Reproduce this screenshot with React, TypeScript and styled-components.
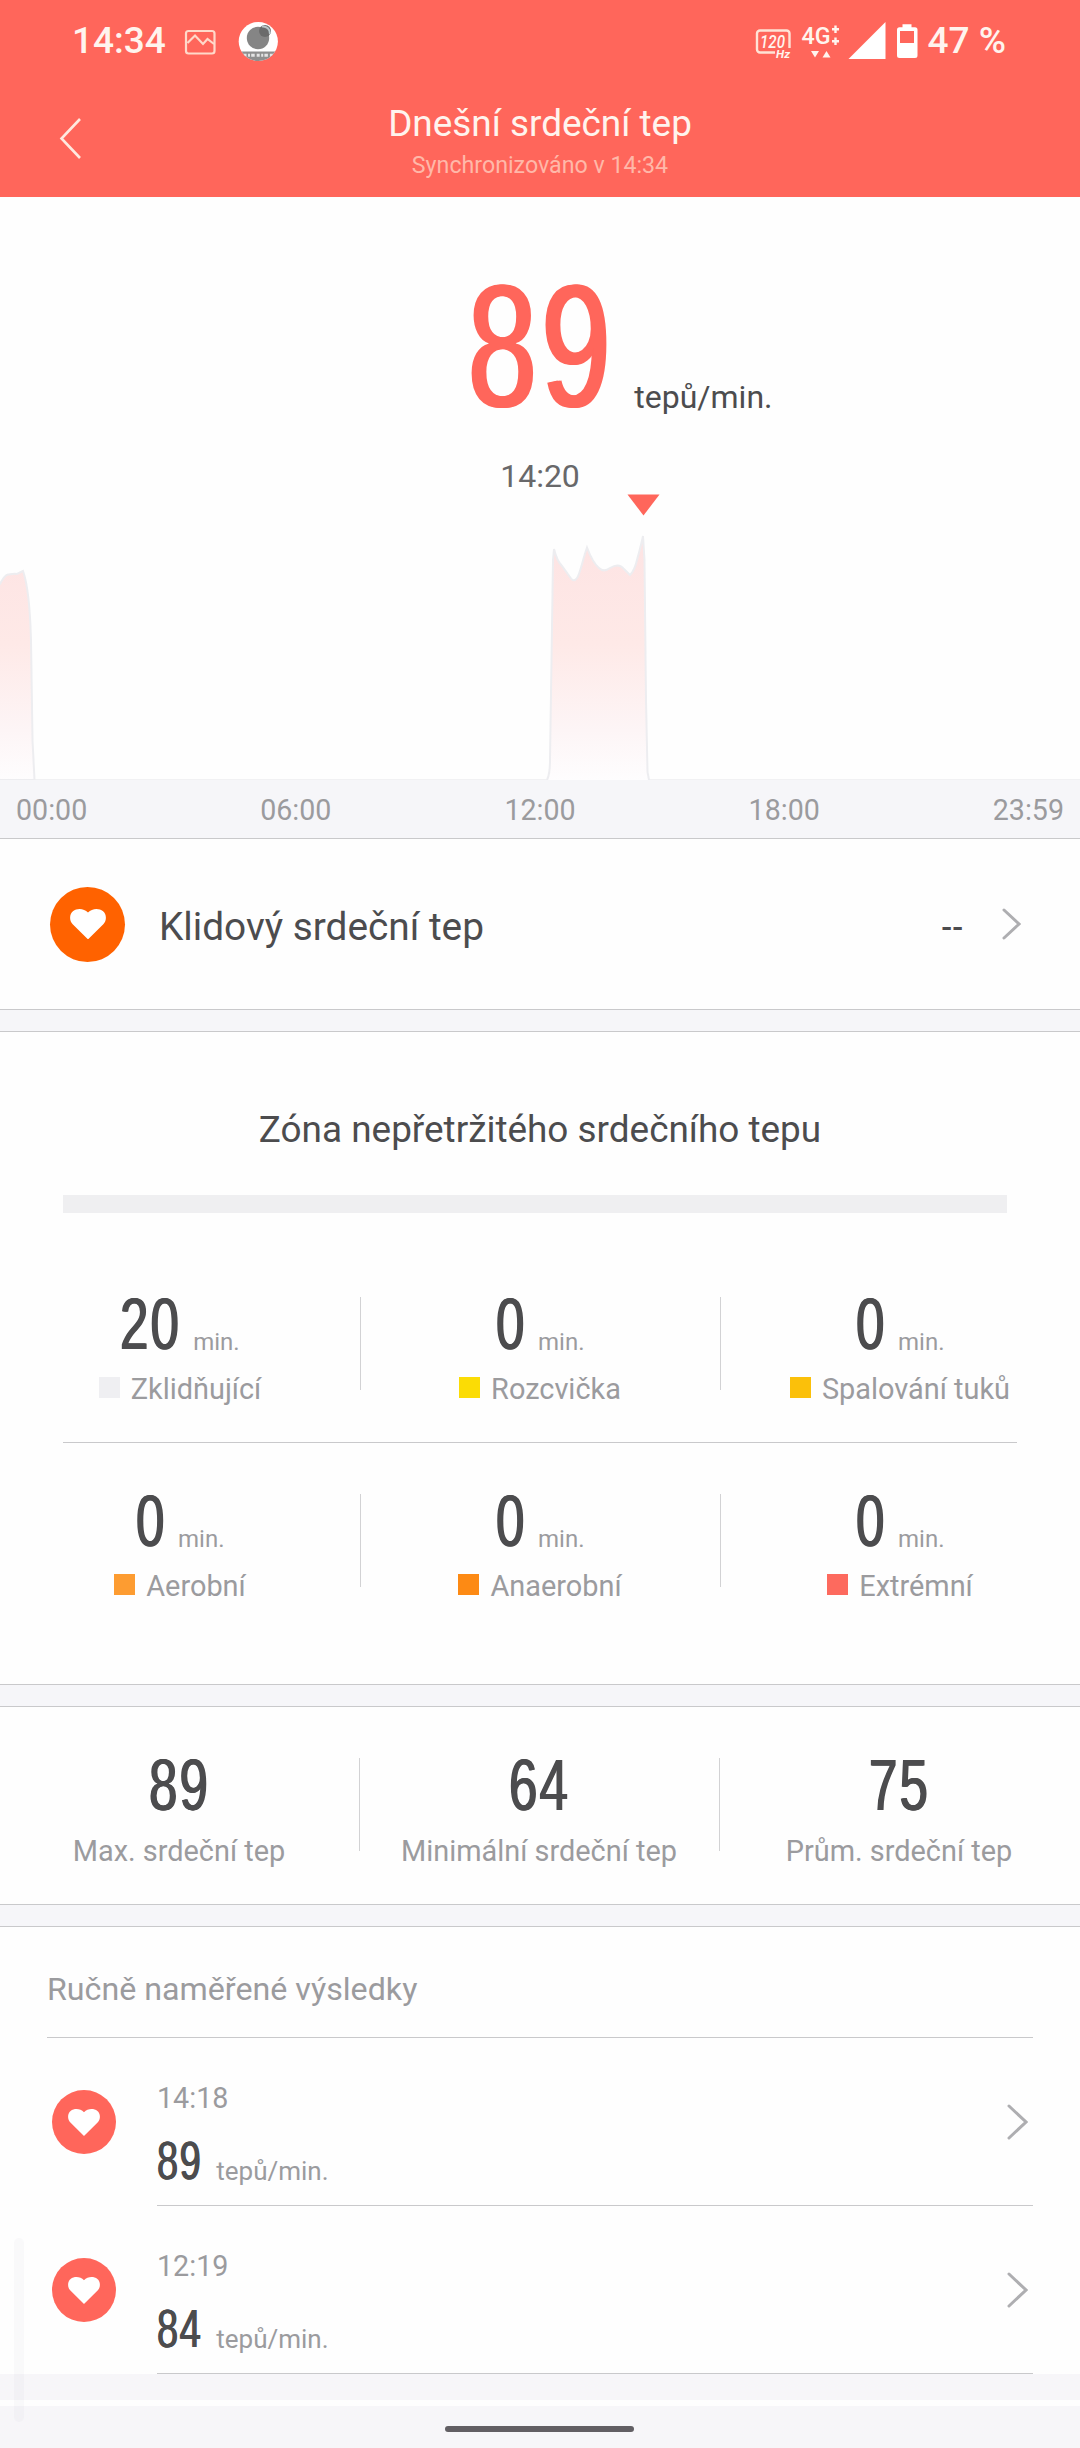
import React from "react";
import styled, { createGlobalStyle } from "styled-components";

const coral = "#ff665b";
const ink = "#4c4c4e";
const muted = "#9b9b9e";
const line = "#c9c9cb";
const paper = "#fefefe";
const wash = "#f6f6f9";

const GlobalStyle = createGlobalStyle`
  * { box-sizing: border-box; }
  body { margin: 0; background: ${paper}; }
  svg { display: block; flex: none; }
`;

const Screen = styled.main`
  position: relative;
  display: flex;
  flex-direction: column;
  width: 1080px;
  height: 2448px;
  overflow: hidden;
  background: ${paper};
  color: ${ink};
  font-family: Roboto, "Noto Sans", sans-serif;
  white-space: nowrap;
`;

const Header = styled.header`
  height: 197px;
  background: ${coral};
  color: #fff4ee;
`;

const StatusBar = styled.div`
  display: flex;
  align-items: center;
  justify-content: space-between;
  height: 82px;
  padding: 0 74px 0 72px;
  font-size: 37px;
  font-weight: 500;
  line-height: 82px;
`;

const StatusGroup = styled.div`
  display: flex;
  align-items: center;
  gap: 15px;
`;

const StatusIcons = styled.svg`
  margin-right: -5px;
  font-family: Roboto, sans-serif;
`;

const TitleBar = styled.div`
  display: grid;
  grid-template-columns: 100px 1fr 100px;
  height: 115px;
`;

const BackButton = styled.button`
  display: flex;
  padding: 35px 0 0 59px;
  border: 0;
  background: none;
`;

const Titles = styled.div`
  display: flex;
  flex-direction: column;
  align-items: center;
  padding-top: 19px;
`;

const Title = styled.h1`
  margin: 0;
  font-size: 36.9px;
  font-weight: 400;
  line-height: 46px;
`;

const Subtitle = styled.div`
  color: #ffb8a9;
  font-size: 23.2px;
  line-height: 36px;
`;

const Condensed = styled.span<{ $digits: number; $size: number; $color?: string }>`
  display: inline-block;
  width: calc(${(p) => p.$digits} * 0.71 * (1ch + 0.04em));
  color: ${(p) => p.$color ?? ink};
  font-family: "Liberation Sans", Arial, sans-serif;
  font-size: ${(p) => p.$size}px;
  letter-spacing: 0.04em;
  transform: translateY(-0.012em) scaleX(0.71);
  transform-origin: 0 50%;
  text-shadow: ${(p) => `${p.$size * 0.015}px 0 currentColor, -${p.$size * 0.015}px 0 currentColor`};
`;

const Hero = styled.section`
  display: flex;
  flex-direction: column;
  height: 583px;
  padding-top: 51px;
`;

const HeroReading = styled.div`
  display: flex;
  align-items: baseline;
  height: 200px;
  padding-left: 468px;
  line-height: 200px;
`;

const HeroUnit = styled.span`
  margin-left: 19px;
  font-size: 32px;
`;

const HeroTime = styled.div`
  margin-top: 12px;
  color: #68686a;
  font-size: 32px;
  line-height: 32px;
  text-align: center;
`;

const Axis = styled.div`
  display: flex;
  justify-content: space-between;
  height: 59px;
  padding: 2px 16px 0;
  border-bottom: 1px solid ${line};
  background: ${wash};
  color: ${muted};
  font-size: 28.6px;
  line-height: 56px;
`;

const RestingRow = styled.section`
  display: flex;
  align-items: center;
  height: 170px;
  padding: 0 59px 0 50px;
`;

const Badge = styled.div<{ $size: number; $color: string }>`
  display: flex;
  align-items: center;
  justify-content: center;
  flex: none;
  width: ${(p) => p.$size}px;
  height: ${(p) => p.$size}px;
  border-radius: 50%;
  background: ${(p) => p.$color};
`;

const RestingLabel = styled.div`
  flex: 1;
  padding: 4px 0 0 34px;
  font-size: 38.8px;
`;

const RestingValue = styled.div`
  padding: 5px 39px 0 0;
  font-size: 32px;
  font-weight: 500;
`;

const Gap = styled.div`
  height: 23px;
  border: solid ${line};
  border-width: 1px 0;
  background: ${wash};
`;

const Zones = styled.section`
  height: 652px;
  padding-top: 73px;
`;

const ZonesTitle = styled.h2`
  margin: 0;
  font-size: 36.9px;
  font-weight: 400;
  line-height: 50px;
  text-align: center;
`;

const ZoneBar = styled.div`
  height: 18px;
  margin: 40px 73px 0 63px;
  background: #efeff1;
`;

const ZoneRow = styled.div`
  display: grid;
  grid-template-columns: repeat(3, 1fr);
  height: 157px;
`;

const ZoneLine = styled.div`
  height: 1px;
  margin: 0 63px 39px;
  background: ${line};
`;

const ZoneBody = styled.div`
  padding-top: 72px;
`;

const Cell = styled.div<{ $ruled: boolean; $ruleTop: number }>`
  display: flex;
  flex-direction: column;
  align-items: center;
  padding-top: 5px;
  background: ${(p) =>
    p.$ruled ? `linear-gradient(#d2d2d4, #d2d2d4) 0 ${p.$ruleTop}px / 1px 93px no-repeat` : "none"};
`;

const CellReading = styled.div`
  display: flex;
  align-items: baseline;
  gap: 12px;
  height: 70px;
  line-height: 70px;
`;

const Minutes = styled.span`
  color: ${muted};
  font-size: 24px;
`;

const CellLabel = styled.div`
  display: flex;
  align-items: center;
  gap: 11px;
  margin-top: 9px;
  color: ${muted};
  font-size: 28.9px;
  line-height: 41px;
`;

const Swatch = styled.i<{ $color: string }>`
  width: 21px;
  height: 21px;
  margin-bottom: 4px;
  background: ${(p) => p.$color};
`;

const Stats = styled.section`
  display: grid;
  grid-template-columns: repeat(3, 1fr);
  height: 197px;
  margin: 0 1px 0 -1px;
  padding-top: 39px;

  ${CellLabel} {
    margin-top: 10px;
  }
`;

const Results = styled.section`
  padding: 0 47px;
`;

const ResultsTitle = styled.h2`
  height: 111px;
  margin: 0;
  padding-top: 40px;
  border-bottom: 1px solid ${line};
  color: ${muted};
  font-size: 32.2px;
  font-weight: 400;
  line-height: 44px;
`;

const ResultRow = styled.div`
  display: flex;
  align-items: center;
  height: 168px;
  padding-left: 5px;
`;

const ResultBody = styled.div`
  display: flex;
  align-items: center;
  flex: 1;
  height: 168px;
  margin-left: 41px;
  padding-right: 5px;
  border-bottom: 1px solid ${line};
`;

const ResultText = styled.div`
  flex: 1;
  align-self: flex-start;
  padding-top: 42px;
  color: ${muted};
`;

const ResultTime = styled.div`
  font-size: 28.7px;
  line-height: 36px;
`;

const ResultReading = styled.div`
  display: flex;
  align-items: baseline;
  gap: 14px;
  height: 54px;
  margin-top: 19px;
  font-size: 26px;
  line-height: 54px;
`;

const Footer = styled.footer`
  display: flex;
  flex: 1;
  flex-direction: column;
  align-items: center;
  border-top: 26px solid #f7f6f9;
  background: #f7f6f9;
`;

const FooterStripe = styled.div`
  width: 100%;
  height: 6px;
  background: ${paper};
`;

const HomeIndicator = styled.div`
  width: 189px;
  height: 6px;
  margin: 20px 2px 0 0;
  border-radius: 3px;
  background: #625f64;
`;

const EdgeHandle = styled.div`
  position: absolute;
  left: 14px;
  top: 2238px;
  width: 10px;
  height: 184px;
  border-radius: 5px;
  background: rgba(90, 90, 120, 0.03);
`;

function Heart({ width }: { width: number }) {
  return (
    <svg width={width} height={(width * 27) / 32} viewBox="0 0 32 27" fill="#fff">
      <path d="M16 27 L2.4 13.6 C-1 10 -.4 4.4 2.6 2 C6.4 -1 12.4 -.6 16 3.2 C19.6 -.6 25.6 -1 29.4 2 C32.4 4.4 33 10 29.6 13.6 Z" />
    </svg>
  );
}

function Chevron({ width, height }: { width: number; height: number }) {
  return (
    <svg width={width} height={height} fill="none" stroke="#aeaeb1" strokeWidth="3" strokeLinecap="round">
      <path d={`M2 2 L${width - 2} ${height / 2} L2 ${height - 2}`} />
    </svg>
  );
}

function NotificationIcons() {
  return (
    <svg width="100" height="46" viewBox="181 16 100 46">
      <g fill="none" stroke="#ffd9ca" strokeWidth="2.2">
        <rect x="186" y="29" width="28.5" height="22.5" rx="2.5" />
        <path d="M187.5 41 L195 33.5 L203 42 L207.5 37 L214 42" />
      </g>
      <clipPath id="avatar">
        <circle cx="258.3" cy="39.5" r="19.6" />
      </clipPath>
      <g clipPath="url(#avatar)">
        <rect x="238" y="19" width="41" height="41" fill="#fff" />
        <rect x="238" y="49.5" width="41" height="11" fill="#8f8f8f" />
        <circle cx="258" cy="36" r="11.2" fill="#858585" />
        <circle cx="265" cy="29" r="6" fill="#6b6b6b" />
        <path d="M262 24.5 a7 7 0 0 1 8 7.5" fill="none" stroke="#b9c4c6" strokeWidth="2" />
        <path d="M243.500 53.300h31" stroke="#e4e4e4" strokeWidth="3" strokeDasharray="3 1.5 2 1.2 3.500 2" />
      </g>
    </svg>
  );
}

function SignalIcons() {
  return (
    <StatusIcons width="164" height="46" viewBox="754 16 164 46" fill="#fff4ee">
      <path
        d="M775 50.500H760a3 3 0 0 1-3-3V31.500a3 3 0 0 1 3-3h26.500a3 3 0 0 1 3 3V46"
        fill="none"
        stroke="#ffe3d6"
        strokeWidth="2.4"
      />
      <text x="760" y="45.500" fontSize="17.500" fontWeight="500" fontStyle="italic" textLength="25" lengthAdjust="spacingAndGlyphs">
        120
      </text>
      <text x="776" y="56" fontSize="11" fontWeight="700" fontStyle="italic" textLength="14" lengthAdjust="spacingAndGlyphs">
        Hz
      </text>
      <text x="801.500" y="42" fontSize="24.500" fontWeight="500" textLength="29" lengthAdjust="spacingAndGlyphs">
        4G
      </text>
      <path d="M835.500 23.500v7.500M832 27.200h7M835.500 35.500v7.500M832 39.200h7" stroke="#fff4ee" strokeWidth="2.4" />
      <path d="M811 49h8l-4 6.500zM822.500 55.500h8l-4-6.500z" />
      <path d="M848.500 57 L885.500 20 V57 Z" fill="#fff" />
      <path
        fillRule="evenodd"
        fill="#fff"
        d="M902.500 22.300h9v3h3.500a2.500 2.500 0 0 1 2.500 2.500V53.500a2.500 2.500 0 0 1-2.500 2.500H899.500a2.500 2.500 0 0 1-2.500-2.500V27.800a2.500 2.500 0 0 1 2.500-2.500h3zM900 29v12h14V29z"
      />
    </StatusIcons>
  );
}

const leftCurve =
  "M-3 93 L0 92 C3 86 5 83 8 82.500 C12 82 14 81.500 17 82 L23 79 C27 90 30 112 31 148 L32.500 248 L34.500 288";
const rightCurve =
  "M547 288 C549 284 550 280 550 268 L551.500 168 L553 68 L554 57 C556 65 558 70 562 74 L571 86.500 C573 89 575 89 577 86 C580 82 582 70 587 55.500 C591 66 594 72 599 76 C602 79 606 79 610 76 C615 73 620 72 624 77 L630 83 C633 80 635 77 637 68 C639 60 641 54 643 44 L644.500 68 L646 208 L647.500 280 L649 288";

function HeartRateChart() {
  return (
    <svg width="1080" height="288" viewBox="0 0 1080 288">
      <defs>
        <linearGradient id="fade" gradientUnits="userSpaceOnUse" x1="0" y1="40" x2="0" y2="288">
          <stop offset="0" stopColor="#fde3e3" />
          <stop offset="0.45" stopColor="#fee9e7" />
          <stop offset="0.8" stopColor="#fdf5f6" />
          <stop offset="1" stopColor="#fefdfe" />
        </linearGradient>
      </defs>
      <path d="M34 287.500 H547 M649 287.500 H1080" stroke="#f1f1f3" />
      <g fill="url(#fade)" stroke="#ededf0" strokeWidth="2">
        <path d={`${leftCurve} H-3`} />
        <path d={rightCurve} />
      </g>
      <path d="M627.500 2.500 H659.500 L643.500 23.500 Z" fill={coral} />
    </svg>
  );
}

type Zone = { value: string; label: string; color: string };

const zoneRows: Zone[][] = [
  [
    { value: "20", label: "Zklidňující", color: "#efeff2" },
    { value: "0", label: "Rozcvička", color: "#fbdc05" },
    { value: "0", label: "Spalování tuků", color: "#fbc00a" },
  ],
  [
    { value: "0", label: "Aerobní", color: "#fd9c31" },
    { value: "0", label: "Anaerobní", color: "#fd8a14" },
    { value: "0", label: "Extrémní", color: "#fd6a5e" },
  ],
];

const stats = [
  { value: "89", label: "Max. srdeční tep" },
  { value: "64", label: "Minimální srdeční tep" },
  { value: "75", label: "Prům. srdeční tep" },
];

const results = [
  { time: "14:18", value: "89" },
  { time: "12:19", value: "84" },
];

function ZoneCells({ zones }: { zones: Zone[] }) {
  return (
    <ZoneRow>
      {zones.map((zone, i) => (
        <Cell key={zone.label} $ruled={i > 0} $ruleTop={12}>
          <CellReading>
            <Condensed $digits={zone.value.length} $size={72}>{zone.value}</Condensed>
            <Minutes>min.</Minutes>
          </CellReading>
          <CellLabel>
            <Swatch $color={zone.color} />
            {zone.label}
          </CellLabel>
        </Cell>
      ))}
    </ZoneRow>
  );
}

export default function App() {
  return (
    <Screen>
      <GlobalStyle />
      <Header>
        <StatusBar>
          <StatusGroup>
            14:34
            <NotificationIcons />
          </StatusGroup>
          <StatusGroup>
            <SignalIcons />
            47 %
          </StatusGroup>
        </StatusBar>
        <TitleBar>
          <BackButton aria-label="Zpět">
            <svg width="23" height="43" fill="none" stroke="#ffe9df" strokeWidth="2.6">
              <path d="M21 2 L2.500 21.500 L21 41" />
            </svg>
          </BackButton>
          <Titles>
            <Title>Dnešní srdeční tep</Title>
            <Subtitle>Synchronizováno v 14:34</Subtitle>
          </Titles>
        </TitleBar>
      </Header>

      <Hero>
        <HeroReading>
          <Condensed $digits={2} $size={174} $color={coral}>89</Condensed>
          <HeroUnit>tepů/min.</HeroUnit>
        </HeroReading>
        <HeroTime>14:20</HeroTime>
        <HeartRateChart />
      </Hero>
      <Axis>
        {["00:00", "06:00", "12:00", "18:00", "23:59"].map((tick) => (
          <span key={tick}>{tick}</span>
        ))}
      </Axis>

      <RestingRow>
        <Badge $size={75} $color="#ff6200">
          <Heart width={36} />
        </Badge>
        <RestingLabel>Klidový srdeční tep</RestingLabel>
        <RestingValue>--</RestingValue>
        <Chevron width={19} height={32} />
      </RestingRow>
      <Gap />

      <Zones>
        <ZonesTitle>Zóna nepřetržitého srdečního tepu</ZonesTitle>
        <ZoneBar />
        <ZoneBody>
          <ZoneCells zones={zoneRows[0]} />
          <ZoneLine />
          <ZoneCells zones={zoneRows[1]} />
        </ZoneBody>
      </Zones>
      <Gap />

      <Stats>
        {stats.map((stat, i) => (
          <Cell key={stat.label} $ruled={i > 0} $ruleTop={12}>
            <CellReading>
              <Condensed $digits={2} $size={72}>{stat.value}</Condensed>
            </CellReading>
            <CellLabel>{stat.label}</CellLabel>
          </Cell>
        ))}
      </Stats>
      <Gap />

      <Results>
        <ResultsTitle>Ručně naměřené výsledky</ResultsTitle>
        {results.map((result) => (
          <ResultRow key={result.time}>
            <Badge $size={64} $color={coral}>
              <Heart width={32} />
            </Badge>
            <ResultBody>
              <ResultText>
                <ResultTime>{result.time}</ResultTime>
                <ResultReading>
                  <Condensed $digits={2} $size={53.5}>{result.value}</Condensed>
                  tepů/min.
                </ResultReading>
              </ResultText>
              <Chevron width={21} height={36} />
            </ResultBody>
          </ResultRow>
        ))}
      </Results>

      <Footer>
        <FooterStripe />
        <HomeIndicator />
      </Footer>
      <EdgeHandle />
    </Screen>
  );
}
